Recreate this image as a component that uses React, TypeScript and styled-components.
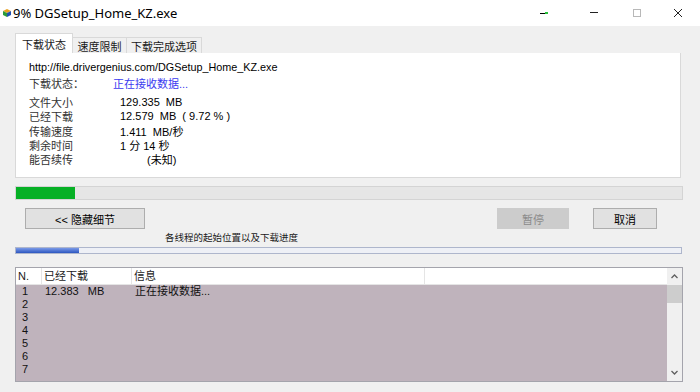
import React from 'react'
import styled, { createGlobalStyle } from 'styled-components'

const GlobalStyle = createGlobalStyle`
  html, body {
    margin: 0;
    padding: 0;
    background: #f0f0f0;
  }
  * {
    box-sizing: border-box;
  }
`

const FONT = `"Liberation Sans", "Noto Sans CJK SC", sans-serif`

const Window = styled.div`
  width: 700px;
  height: 392px;
  display: flex;
  flex-direction: column;
  overflow: hidden;
  font-family: ${FONT};
  color: #1a1a1a;
  background: #f0f0f0;
`

const TitleBar = styled.div`
  height: 26px;
  flex: none;
  background: #ffffff;
  display: flex;
  align-items: center;
  padding-left: 3px;
`

const Title = styled.span`
  margin-left: 2px;
  font-family: "Noto Sans", "Liberation Sans", sans-serif;
  font-size: 13px;
  color: #000;
  white-space: nowrap;
`

const Controls = styled.div`
  margin-left: auto;
  display: flex;
  align-items: center;
  height: 26px;
`

const CtrlButton = styled.div<{ $w: number; $gap?: number }>`
  width: ${({ $w }) => $w}px;
  margin-left: ${({ $gap }) => $gap || 0}px;
  height: 26px;
  display: flex;
  align-items: center;
  justify-content: center;
`

const Body = styled.div`
  flex: 1;
  display: flex;
  flex-direction: column;
  padding: 7px 17px 0 15px;
`

const TabStrip = styled.div`
  height: 20px;
  display: flex;
  align-items: flex-end;
`

const Tab = styled.div<{ $active?: boolean; $w: number }>`
  width: ${({ $w }) => $w}px;
  height: ${({ $active }) => ($active ? 20 : 16)}px;
  background: ${({ $active }) => ($active ? '#ffffff' : '#f0f0f0')};
  border: 1px solid #d9d9d9;
  border-bottom: none;
  margin-left: ${({ $active }) => ($active ? 0 : -1)}px;
  display: flex;
  align-items: center;
  justify-content: center;
  font-size: 11px;
  color: #1a1a1a;
  position: relative;
  z-index: ${({ $active }) => ($active ? 1 : 0)};
`

const Panel = styled.div`
  width: 666px;
  height: 125px;
  background: #ffffff;
  border: 1px solid #d9d9d9;
  border-top: none;
  padding: 7px 0 0 13px;
  font-size: 11px;
`

const UrlLine = styled.div`
  line-height: 14px;
  font-size: 10.8px;
  color: #000;
`

const StatusLine = styled.div`
  margin-top: 3px;
  line-height: 14px;
  display: flex;
`

const StatusValue = styled.span`
  margin-left: 29px;
  color: #3b3bf0;
`

const InfoGrid = styled.div`
  margin-top: 4px;
  display: grid;
  grid-template-columns: 91px 1fr;
  grid-auto-rows: 14.25px;
  align-items: center;
`

const Label = styled.div`
  color: #333;
`

const Value = styled.div<{ $indent?: number }>`
  color: #000;
  padding-left: ${({ $indent }) => $indent || 0}px;
  white-space: pre;
`

const ProgressTrack = styled.div`
  margin-top: 8px;
  height: 14px;
  width: 668px;
  background: #e6e6e6;
  border: 1px solid #d4d4d4;
`

const ProgressFill = styled.div`
  height: 100%;
  background: #06b025;
`

const ButtonRow = styled.div`
  margin-top: 8px;
  width: 668px;
  display: flex;
  align-items: center;
  padding: 0 26px 0 10px;
`

const Button = styled.div<{ $w: number; $disabled?: boolean }>`
  width: ${({ $w }) => $w}px;
  height: 21px;
  display: flex;
  align-items: center;
  justify-content: center;
  font-size: 11px;
  background: ${({ $disabled }) => ($disabled ? '#cccccc' : '#e1e1e1')};
  border: 1px solid ${({ $disabled }) => ($disabled ? '#cccccc' : '#adadad')};
  color: ${({ $disabled }) => ($disabled ? '#8a8a8a' : '#000')};
`

const Spacer = styled.div`
  flex: 1;
`

const ButtonGap = styled.div`
  width: 24px;
`

const Caption = styled.div`
  margin-top: 2px;
  padding-left: 150px;
  height: 14px;
  line-height: 14px;
  font-size: 9.5px;
  color: #1a1a1a;
`

const ThreadBar = styled.div`
  margin-top: 2px;
  width: 667px;
  height: 7px;
  background: #eef0f6;
  border: 1px solid #aeb6cc;
`

const ThreadFill = styled.div`
  height: 100%;
  background: linear-gradient(#7b9ae8, #2c56c0);
`

const ListBox = styled.div`
  margin-top: 13px;
  width: 668px;
  height: 115px;
  border: 1px solid #a4a4ac;
  display: flex;
  background: #ffffff;
`

const ListMain = styled.div`
  flex: 1;
  display: flex;
  flex-direction: column;
  overflow: hidden;
`

const HeaderRow = styled.div`
  height: 17px;
  flex: none;
  display: grid;
  grid-template-columns: 26px 90px 293px 1fr;
  background: #ffffff;
  border-bottom: 1px solid #e5e5e5;
`

const HeadCell = styled.div`
  padding-left: 2px;
  font-size: 11px;
  line-height: 16px;
  border-right: 1px solid #e5e5e5;
  color: #1a1a1a;
  &:last-child {
    border-right: none;
  }
`

const Rows = styled.div`
  flex: 1;
  background: #bfb3bc;
  overflow: hidden;
`

const Row = styled.div`
  height: 13px;
  display: grid;
  grid-template-columns: 26px 90px 293px 1fr;
  font-size: 11px;
  line-height: 13px;
  color: #111;
`

const Cell = styled.div<{ $pad?: number }>`
  padding-left: ${({ $pad }) => $pad ?? 3}px;
  white-space: pre;
`

const ScrollBar = styled.div`
  width: 15px;
  flex: none;
  background: #f0f0f0;
  display: flex;
  flex-direction: column;
`

const ScrollArrow = styled.div`
  height: 17px;
  display: flex;
  align-items: center;
  justify-content: center;
`

const ScrollThumb = styled.div`
  height: 18px;
  background: #cdcdcd;
`

const AppIcon = () => (
  <svg width="8" height="8" viewBox="0 0 8 8">
    <polygon points="4,0 8,2 4,4 0,2" fill="#e8a020" />
    <polygon points="0,2 4,4 4,8 0,6" fill="#2a9a3a" />
    <polygon points="8,2 4,4 4,8 8,6" fill="#2050b0" />
  </svg>
)

const Chevron = ({ up }: { up?: boolean }) => (
  <svg width="7" height="5" viewBox="0 0 7 5">
    <path d={up ? 'M0.5 4 L3.5 1 L6.5 4' : 'M0.5 1 L3.5 4 L6.5 1'} stroke="#606060" strokeWidth="1.3" fill="none" />
  </svg>
)

const infoRows: { label: string; value: string; indent?: number }[] = [
  { label: '文件大小', value: '129.335  MB' },
  { label: '已经下载', value: '12.579  MB  ( 9.72 % )' },
  { label: '传输速度', value: '1.411  MB/秒' },
  { label: '剩余时间', value: '1 分 14 秒' },
  { label: '能否续传', value: '(未知)', indent: 27 },
]

const threads = [
  { n: '1', got: '12.383   MB', info: '正在接收数据...' },
  { n: '2', got: '', info: '' },
  { n: '3', got: '', info: '' },
  { n: '4', got: '', info: '' },
  { n: '5', got: '', info: '' },
  { n: '6', got: '', info: '' },
  { n: '7', got: '', info: '' },
]

const App: React.FC = () => {
  const percent = 9.72
  return (
    <Window>
      <GlobalStyle />
      <TitleBar>
        <AppIcon />
        <Title>9% DGSetup_Home_KZ.exe</Title>
        <Controls>
          <CtrlButton $w={20}>
            <svg width="9" height="4" viewBox="0 0 9 4">
              <rect x="0" y="2" width="8" height="1" fill="#000" />
              <rect x="5" y="1" width="3" height="2" fill="#27c23a" />
            </svg>
          </CtrlButton>
          <CtrlButton $w={46} $gap={17}>
            <svg width="10" height="10" viewBox="0 0 10 10">
              <rect x="1" y="4" width="8" height="1" fill="#222" />
            </svg>
          </CtrlButton>
          <CtrlButton $w={39}>
            <svg width="10" height="10" viewBox="0 0 10 10">
              <rect x="1.5" y="1.5" width="7" height="7" fill="none" stroke="#b8b8b8" />
            </svg>
          </CtrlButton>
          <CtrlButton $w={44}>
            <svg width="10" height="10" viewBox="0 0 10 10">
              <path d="M1 1 L9 9 M9 1 L1 9" stroke="#222" strokeWidth="1" />
            </svg>
          </CtrlButton>
        </Controls>
      </TitleBar>
      <Body>
        <TabStrip>
          <Tab $active $w={58}>下载状态</Tab>
          <Tab $w={55}>速度限制</Tab>
          <Tab $w={76}>下载完成选项</Tab>
        </TabStrip>
        <Panel>
          <UrlLine>http://file.drivergenius.com/DGSetup_Home_KZ.exe</UrlLine>
          <StatusLine>
            <Label>下载状态：</Label>
            <StatusValue>正在接收数据...</StatusValue>
          </StatusLine>
          <InfoGrid>
            {infoRows.map((r) => (
              <React.Fragment key={r.label}>
                <Label>{r.label}</Label>
                <Value $indent={r.indent}>{r.value}</Value>
              </React.Fragment>
            ))}
          </InfoGrid>
        </Panel>
        <ProgressTrack>
          <ProgressFill style={{ width: `${(percent / 100) * 666 * 0.91}px` }} />
        </ProgressTrack>
        <ButtonRow>
          <Button $w={120}>&lt;&lt; 隐藏细节</Button>
          <Spacer />
          <Button $w={72} $disabled>暂停</Button>
          <ButtonGap />
          <Button $w={64}>取消</Button>
        </ButtonRow>
        <Caption>各线程的起始位置以及下载进度</Caption>
        <ThreadBar>
          <ThreadFill style={{ width: '63px' }} />
        </ThreadBar>
        <ListBox>
          <ListMain>
            <HeaderRow>
              <HeadCell>N.</HeadCell>
              <HeadCell>已经下载</HeadCell>
              <HeadCell>信息</HeadCell>
              <HeadCell />
            </HeaderRow>
            <Rows>
              {threads.map((t) => (
                <Row key={t.n}>
                  <Cell $pad={6}>{t.n}</Cell>
                  <Cell>{t.got}</Cell>
                  <Cell>{t.info}</Cell>
                  <Cell />
                </Row>
              ))}
            </Rows>
          </ListMain>
          <ScrollBar>
            <ScrollArrow>
              <Chevron up />
            </ScrollArrow>
            <ScrollThumb />
            <Spacer />
            <ScrollArrow>
              <Chevron />
            </ScrollArrow>
          </ScrollBar>
        </ListBox>
      </Body>
    </Window>
  )
}

export default App
